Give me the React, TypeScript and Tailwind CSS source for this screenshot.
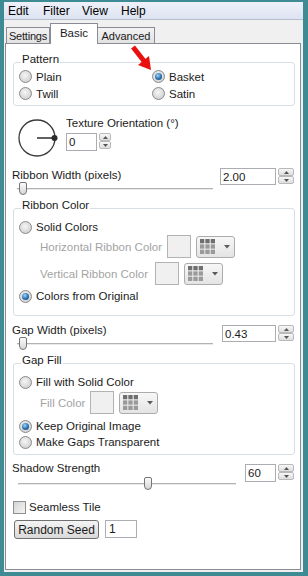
import React from 'react'

const Radio = ({ checked }: { checked?: boolean }) => (
  <span className="flex h-[13px] w-[13px] shrink-0 items-center justify-center rounded-full border border-[#8a8a8a] bg-[radial-gradient(circle_at_45%_40%,#f6f6f6,#c6c6c6)]">
    {checked && (
      <span className="h-[7px] w-[7px] rounded-full bg-[radial-gradient(circle_at_40%_35%,#9ad6ff,#2a6fae_55%,#163f66)]" />
    )}
  </span>
)

const RadioRow = ({ label, checked, className = '' }: { label: string; checked?: boolean; className?: string }) => (
  <div className={`flex h-[16px] items-center gap-[4px] ${className}`}>
    <Radio checked={checked} />
    <span>{label}</span>
  </div>
)

const SpinBtn = ({ up }: { up?: boolean }) => (
  <div className="flex h-[8px] items-center justify-center rounded-[2px] border border-[#b9b9b9] bg-linear-to-b from-[#f7f7f7] to-[#dedede]">
    <svg width="5" height="3" viewBox="0 0 5 3">
      <path d={up ? 'M0 3h5L2.5 0z' : 'M0 0h5L2.5 3z'} fill="#555" />
    </svg>
  </div>
)

const Spinner = ({ w }: { w: string }) => (
  <div className={`ml-[2px] flex flex-col ${w}`}>
    <SpinBtn up />
    <SpinBtn />
  </div>
)

function SpinBox({ value, inputW, spinW, h, className = '' }: { value: string; inputW: string; spinW: string; h: string; className?: string }) {
  return (
    <div className={`flex items-start ${className}`}>
      <div className={`flex items-center border border-[#abadb3] bg-white pl-[2px] ${inputW} ${h}`}>{value}</div>
      <Spinner w={spinW} />
    </div>
  )
}

function Slider({ thumbLeft, className = '' }: { thumbLeft: number; className?: string }) {
  return (
    <div className={`relative h-[14px] ${className}`}>
      <div className="absolute left-0 right-0 top-[6px] h-[2px] border-b border-[#e9e9e9] bg-[#b2b2b2]" />
      <div
        className="absolute top-0 h-[13px] w-[8px] rounded-[2px] rounded-b-[4px] border border-[#767676] bg-linear-to-b from-[#fbfbfb] to-[#d6d6d6]"
        style={{ left: thumbLeft }}
      />
    </div>
  )
}

const Swatch = () => <div className="h-[23px] w-[24px] border border-[#b3b3b3] bg-[#f0f0f0]" />

const GridButton = () => (
  <div className="flex h-[22px] w-[39px] items-center rounded-[3px] border border-[#acacac] bg-linear-to-b from-[#f7f7f7] to-[#e4e4e4] pl-[3px]">
    <svg width="15" height="15" viewBox="0 0 14 14">
      {[0, 5, 10].map(y =>
        [0, 5, 10].map(x => (
          <rect key={`${x}-${y}`} x={x} y={y} width="4" height="4" fill={y === 0 ? '#6f6f6f' : '#9a9a9a'} />
        ))
      )}
    </svg>
    <svg className="ml-[9px]" width="6" height="4" viewBox="0 0 6 4">
      <path d="M0 0h6L3 3.5z" fill="#5a5a5a" />
    </svg>
  </div>
)

function Group({ title, className = '', children }: { title: string; className?: string; children: React.ReactNode }) {
  return (
    <div className={`ml-[7px] mr-[5px] rounded-[3px] border border-[#d5dfe5] pl-[5px] ${className}`}>
      <div className="-mt-[11px] ml-[2px] h-[14px] w-fit bg-white px-[1px]">{title}</div>
      {children}
    </div>
  )
}

export default function App() {
  return (
    <div className="relative h-[576px] w-[308px] overflow-hidden bg-[#3f8b93] pb-[4px] pl-[4px] pr-[5px] pt-[2px] font-['Liberation_Sans',Arial,sans-serif] text-[11.5px] leading-[14px] text-[#1b1b1b]">
      <div className="flex h-full flex-col bg-[#f0f0f0]">
        {/* Menu */}
        <div className="flex h-[18px] items-center border-b border-[#b8bdcc] bg-linear-to-b from-[#eef1f9] to-[#dde3f1] pl-[4px] text-[12px] text-black">
          <span className="w-[35px]">Edit</span>
          <span className="w-[39px]">Filter</span>
          <span className="w-[39px]">View</span>
          <span>Help</span>
        </div>

        {/* Tabs */}
        <div className="flex h-[23px] items-end pl-[2px] text-[11px]">
          <div className="flex h-[16px] w-[44px] items-center justify-center border border-b-0 border-[#898c95] bg-linear-to-b from-[#f3f3f3] to-[#e2e2e2] tracking-[-0.2px]">Settings</div>
          <div className="relative z-10 -mb-[1px] flex h-[21px] w-[48px] items-center justify-center border border-b-0 border-[#898c95] bg-white pb-[3px] text-[11.5px]">Basic</div>
          <div className="flex h-[16px] w-[57px] items-center justify-center border border-b-0 border-l-0 border-[#898c95] bg-linear-to-b from-[#f3f3f3] to-[#e2e2e2]">Advanced</div>
        </div>

        {/* Panel */}
        <div className="mb-[2px] ml-[1px] mr-[2px] flex flex-1 flex-col border border-[#898c95] bg-white">
          <Group title="Pattern" className="mt-[18px] pb-[3px]">
            <div className="mt-[2px] grid grid-cols-[133px_1fr]">
              <RadioRow label="Plain" className="h-[17px]" />
              <RadioRow label="Basket" checked className="h-[17px]" />
              <RadioRow label="Twill" className="h-[17px]" />
              <RadioRow label="Satin" className="h-[17px]" />
            </div>
          </Group>

          {/* Texture orientation */}
          <div className="mt-[10px] flex items-start">
            <svg className="ml-[11px]" width="42" height="42" viewBox="0 0 42 42">
              <circle cx="20" cy="22" r="18" fill="none" stroke="#3a3a3a" strokeWidth="1.3" />
              <line x1="20" y1="22" x2="37" y2="22" stroke="#3a3a3a" strokeWidth="1.6" />
              <circle cx="37.5" cy="22" r="3" fill="#2a2a2a" />
            </svg>
            <div className="ml-[7px] flex flex-col">
              <span className="h-[14px]">Texture Orientation (°)</span>
              <SpinBox value="0" inputW="w-[31px]" spinW="w-[12px]" h="h-[18px]" className="mt-[3px]" />
            </div>
          </div>

          {/* Ribbon width */}
          <div className="mt-[10px] flex gap-[7px] px-[6px]">
            <div className="flex flex-1 flex-col">
              <span className="h-[14px]">Ribbon Width (pixels)</span>
              <Slider thumbLeft={2} className="ml-[5px]" />
            </div>
            <SpinBox value="2.00" inputW="w-[56px]" spinW="w-[16px]" h="h-[17px]" />
          </div>

          <Group title="Ribbon Color" className="mt-[12px] pb-[11px]">
            <RadioRow label="Solid Colors" className="mt-[7px]" />
            <div className="flex h-[23px] items-center gap-[5px] pl-[21px] text-[#a3a3a3]">
              <span>Horizontal Ribbon Color</span>
              <Swatch />
              <GridButton />
            </div>
            <div className="mt-[4px] flex h-[23px] items-center gap-[5px] pl-[21px] text-[#a3a3a3]">
              <span className="mr-[2px]">Vertical Ribbon Color</span>
              <Swatch />
              <GridButton />
            </div>
            <RadioRow label="Colors from Original" checked className="mt-[3px]" />
          </Group>

          {/* Gap width */}
          <div className="mt-[7px] flex gap-[7px] px-[6px]">
            <div className="flex flex-1 flex-col">
              <span className="h-[14px]">Gap Width (pixels)</span>
              <Slider thumbLeft={2} className="ml-[5px] mr-[2px]" />
            </div>
            <SpinBox value="0.43" inputW="w-[54px]" spinW="w-[16px]" h="h-[17px]" className="mt-[2px]" />
          </div>

          <Group title="Gap Fill" className="mt-[12px] pb-[4px]">
            <RadioRow label="Fill with Solid Color" className="mt-[7px]" />
            <div className="mt-[1px] flex h-[23px] items-center gap-[5px] pl-[21px] text-[#a3a3a3]">
              <span>Fill Color</span>
              <Swatch />
              <GridButton />
            </div>
            <RadioRow label="Keep Original Image" checked className="mt-[4px]" />
            <RadioRow label="Make Gaps Transparent" />
          </Group>

          {/* Shadow strength */}
          <div className="mt-[6px] flex gap-[9px] px-[6px]">
            <div className="flex flex-1 flex-col">
              <span className="h-[14px]">Shadow Strength</span>
              <Slider thumbLeft={126} className="ml-[6px] mt-[2px]" />
            </div>
            <SpinBox value="60" inputW="w-[31px]" spinW="w-[16px]" h="h-[18px]" className="mt-[3px]" />
          </div>

          {/* Seamless tile */}
          <div className="mt-[9px] flex h-[14px] items-center gap-[3px] pl-[7px]">
            <span className="h-[13px] w-[13px] border border-[#8e8f8f] bg-[linear-gradient(135deg,#d4d4d4,#f4f4f4)] p-[2px]" />
            <span>Seamless Tile</span>
          </div>

          {/* Random seed */}
          <div className="mt-[6px] flex items-start gap-[6px] pl-[8px]">
            <div className="flex h-[19px] w-[85px] items-center justify-center rounded-[3px] border border-[#707070] bg-linear-to-b from-[#f4f4f4] to-[#d9d9d9] text-[12px]">
              Random Seed
            </div>
            <div className="flex h-[18px] w-[32px] items-center border border-[#abadb3] bg-white pl-[3px] text-[12px]">1</div>
          </div>
        </div>
      </div>

      {/* Red arrow annotation */}
      <svg className="absolute left-[128px] top-[40px]" width="28" height="34" viewBox="0 0 28 34">
        <line x1="5" y1="7" x2="16" y2="21" stroke="#e8110f" strokeWidth="5" />
        <polygon points="23,30 10,25 21,16" fill="#e8110f" />
      </svg>
    </div>
  )
}
